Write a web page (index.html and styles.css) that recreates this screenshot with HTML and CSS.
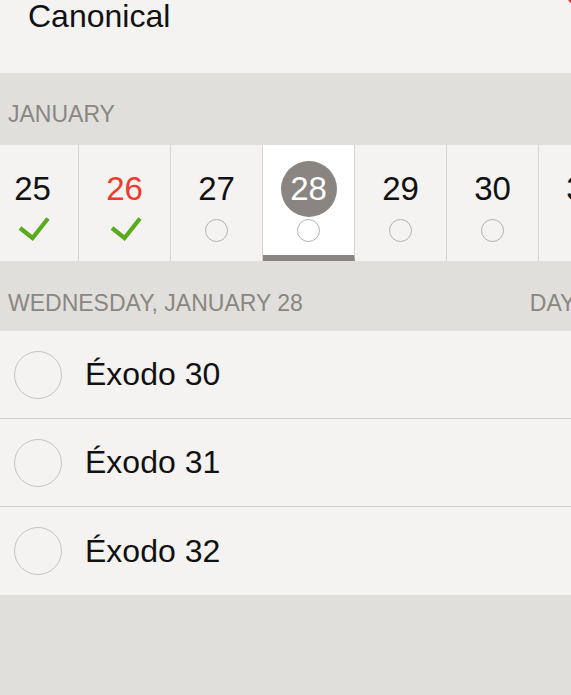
FILE: index.html
```html
<!DOCTYPE html>
<html>
<head>
<meta charset="utf-8">
<link rel="stylesheet" href="styles.css">
</head>
<body>
<div class="app">
  <div class="top">
    <div class="title">Canonical</div>
    <span class="badge"></span>
  </div>
  <div class="section-head month">JANUARY</div>
  <div class="strip">
    <div class="day">
      <div class="num">25</div>
      <div class="mark"><svg class="check" width="36" height="24" viewBox="0 0 36 24"><polyline points="5,10 17.5,20 33,0.5" fill="none" stroke="#5aab1c" stroke-width="4.2"/></svg></div>
    </div>
    <div class="day">
      <div class="num red">26</div>
      <div class="mark"><svg class="check" width="36" height="24" viewBox="0 0 36 24"><polyline points="5,10 17.5,20 33,0.5" fill="none" stroke="#5aab1c" stroke-width="4.2"/></svg></div>
    </div>
    <div class="day">
      <div class="num">27</div>
      <div class="mark"><span class="ring"></span></div>
    </div>
    <div class="day selected">
      <div class="num"><span class="sel-circle">28</span></div>
      <div class="mark"><span class="ring"></span></div>
    </div>
    <div class="day">
      <div class="num">29</div>
      <div class="mark"><span class="ring"></span></div>
    </div>
    <div class="day">
      <div class="num">30</div>
      <div class="mark"><span class="ring"></span></div>
    </div>
    <div class="day">
      <div class="num">31</div>
      <div class="mark"><span class="ring"></span></div>
    </div>
  </div>
  <div class="section-head date-head">
    <span>WEDNESDAY, JANUARY 28</span>
    <span class="dayno">DAY 28</span>
  </div>
  <div class="list">
    <div class="row"><span class="circle"></span><span class="label">Éxodo 30</span></div>
    <div class="row"><span class="circle"></span><span class="label">Éxodo 31</span></div>
    <div class="row last"><span class="circle"></span><span class="label">Éxodo 32</span></div>
  </div>
  <div class="rest"></div>
</div>
</body>
</html>
```

FILE: styles.css
```css
* { box-sizing: border-box; }
html, body { margin: 0; padding: 0; }
body {
  width: 571px;
  height: 695px;
  overflow: hidden;
  background: #e0dfdb;
  font-family: "Liberation Sans", Arial, Helvetica, sans-serif;
}
.app { width: 571px; overflow: hidden; }

.top {
  position: relative;
  height: 73px;
  background: #f4f3f1;
  padding-left: 28px;
  overflow: hidden;
}
.title {
  font-size: 32px;
  line-height: 32px;
  color: #111;
}
.badge {
  position: absolute;
  right: -6px;
  top: -6px;
  width: 9px;
  height: 9px;
  border-radius: 50%;
  background: #e8352a;
}

.section-head {
  background: #e0dfdb;
  color: #8a8682;
  font-size: 23px;
  line-height: 24px;
  padding-left: 8px;
}
.month { height: 72px; padding-top: 29px; }
.date-head {
  height: 70px;
  padding-top: 30px;
  display: flex;
  justify-content: space-between;
  white-space: nowrap;
}
.dayno { margin-right: -36px; }

.strip {
  display: flex;
  height: 116px;
  margin-left: -13px;
  width: 700px;
  background: #f4f3f1;
}
.day {
  flex: 0 0 92px;
  border-right: 1px solid #d6d4d1;
  display: flex;
  flex-direction: column;
  align-items: center;
  padding-top: 16px;
  background: #f4f3f1;
}
.day.selected {
  background: #ffffff;
  border-bottom: 6px solid #8a8580;
}
.num {
  height: 56px;
  display: flex;
  align-items: center;
  justify-content: center;
  font-size: 33px;
  color: #111;
}
.num.red { color: #f03a2c; }
.sel-circle {
  width: 56px;
  height: 56px;
  border-radius: 50%;
  background: #8a8580;
  color: #fff;
  display: flex;
  align-items: center;
  justify-content: center;
}
.mark {
  margin-top: 1px;
  height: 24px;
  width: 36px;
  display: flex;
  align-items: center;
  justify-content: center;
}
.check { display: block; overflow: visible; }
.ring {
  width: 23px;
  height: 23px;
  border-radius: 50%;
  border: 1.5px solid #b3b0ad;
}

.list { background: #f4f3f1; }
.row {
  height: 88px;
  display: flex;
  align-items: center;
  padding-left: 14px;
  border-bottom: 1px solid #d2d0cd;
}
.row.last { border-bottom: none; }
.circle {
  width: 48px;
  height: 48px;
  border-radius: 50%;
  border: 1.5px solid #c6c3c0;
  margin-right: 23px;
  flex: 0 0 auto;
}
.label {
  font-size: 32px;
  color: #111;
}
.rest { height: 100px; background: #e0dfdb; }
```
